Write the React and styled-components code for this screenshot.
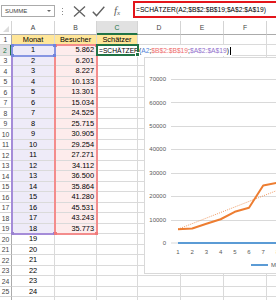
import React from "react";
import styled, { createGlobalStyle } from "styled-components";

const GlobalStyle = createGlobalStyle`
  html, body {
    margin: 0;
    padding: 0;
    background: #fff;
  }
  body {
    width: 276px;
    height: 300px;
    overflow: hidden;
    font-family: "Liberation Sans", Arial, sans-serif;
    color: #000;
  }
`;

const COL_WIDTHS = [43, 42, 41, 43, 43, 43, 43];
const LETTERS = ["A", "B", "C", "D", "E", "F", "G"];
const VISITORS = [
  5862, 6201, 8227, 10133, 13301, 15034, 24525, 25715, 30905, 29254, 27271,
  34112, 36500, 35864, 41280, 45531, 43243, 35773,
];
const ROW_COUNT = 26;

const fmt = (n) => String(n).replace(/\B(?=(\d{3})+(?!\d))/g, ".");

// chart scale, in page pixels
const yv = (v) => 243 - (v * 23.43) / 10000;
const xi = (i) => 178 + 14.2 * (i - 1);

function App() {
  const rows = [];
  for (let r = 1; r <= ROW_COUNT; r++) {
    const cells = LETTERS.map((letter) => {
      let text = "";
      let fill;
      let align = "left";
      if (r === 1 && letter === "A") text = "Monat";
      if (r === 1 && letter === "B") text = "Besucher";
      if (r === 1 && letter === "C") text = "Schätzer";
      if (r === 1 && "ABC".includes(letter)) {
        fill = "#ffe699";
        align = "center";
      }
      if (r >= 2 && r <= 25 && letter === "A") {
        text = String(r - 1);
        align = "center";
      }
      if (r >= 2 && r <= 19 && letter === "A") fill = "#eeebf8";
      if (r >= 2 && r <= 19 && letter === "B") {
        text = fmt(VISITORS[r - 2]);
        fill = "#fdecec";
        align = "right";
      }
      return (
        <Cell key={letter} $fill={fill} $align={align}>
          {text}
        </Cell>
      );
    });
    rows.push(
      <React.Fragment key={r}>
        <RowHead $active={r === 2}>{r}</RowHead>
        {cells}
      </React.Fragment>
    );
  }

  const besucherPts = VISITORS.map((v, i) => `${xi(i + 1)},${yv(v)}`).join(" ");
  const monatPts = VISITORS.map((_, i) => `${xi(i + 1)},${yv(i + 1)}`).join(" ");

  return (
    <Page>
      <GlobalStyle />
      <Toolbar>
        <NameBox>
          <span>SUMME</span>
          <Caret />
        </NameBox>
        <Grip>
          <i />
          <i />
          <i />
        </Grip>
        <ToolButton $gap={10} $w={13}>
          <svg width="13" height="11" viewBox="0 0 13 11">
            <path d="M1 0.5 L12 10.5 M12 0.5 L1 10.5" stroke="#606060" strokeWidth="1.3" fill="none" />
          </svg>
        </ToolButton>
        <ToolButton $gap={6} $w={13}>
          <svg width="13" height="11" viewBox="0 0 13 11">
            <path d="M0.8 5.8 L4.5 9.6 L12.3 0.8" stroke="#606060" strokeWidth="1.4" fill="none" />
          </svg>
        </ToolButton>
        <Fx>
          f<sub>x</sub>
        </Fx>
        <FormulaBox>=SCHÄTZER(A2;$B$2:$B$19;$A$2:$A$19)</FormulaBox>
      </Toolbar>

      <SheetArea>
        <SheetGrid>
          <Corner />
          {LETTERS.map((l) => (
            <ColHead key={l} $active={l === "C"}>
              {l}
            </ColHead>
          ))}
          {rows}
        </SheetGrid>

        <OverlayGrid>
          <RangeBox $col="2" $row="3 / span 18" $color="#a58cd8">
            <Handle $pos="bl" $color="#9a82d0" />
            <Handle $pos="br" $color="#9a82d0" />
          </RangeBox>
          <RangeBox $col="3" $row="3 / span 18" $color="#f38c8c">
            <Handle $pos="tl" $color="#f07a7a" />
            <Handle $pos="tr" $color="#f07a7a" />
            <Handle $pos="bl" $color="#f07a7a" />
            <Handle $pos="br" $color="#f07a7a" />
          </RangeBox>
          <RangeBox $col="2" $row="3" $color="#8796e2">
            <Handle $pos="tl" $color="#7184dc" />
            <Handle $pos="tr" $color="#7184dc" />
            <Handle $pos="bl" $color="#7184dc" />
            <Handle $pos="br" $color="#7184dc" />
          </RangeBox>
          <ActiveCell>
            <FillHandle />
          </ActiveCell>
          <EditText>
            =SCHÄTZER(<Ref $c="#4f7fd8">A2</Ref>;<Ref $c="#ee6a6a">$B$2:$B$19</Ref>;
            <Ref $c="#9270cc">$A$2:$A$19</Ref>)<Caret2 />
          </EditText>

          <Chart>
            <svg width="164" height="215" viewBox="145 58 164 215">
              {[10000, 20000, 30000, 40000, 50000, 60000, 70000].map((v) => (
                <line
                  key={v}
                  x1="171"
                  x2="320"
                  y1={Math.round(yv(v)) + 0.5}
                  y2={Math.round(yv(v)) + 0.5}
                  stroke="#d9d9d9"
                  strokeWidth="1"
                />
              ))}
              <line x1="171" x2="320" y1="243" y2="243" stroke="#d9d9d9" strokeWidth="1" />
              {[0, 10000, 20000, 30000, 40000, 50000, 60000, 70000].map((v) => (
                <text
                  key={v}
                  x="166"
                  y={yv(v)}
                  dy="2.1"
                  textAnchor="end"
                  fontSize="6"
                  fill="#595959"
                  fontFamily="Liberation Sans, Arial, sans-serif"
                >
                  {v}
                </text>
              ))}
              {VISITORS.map((_, i) => (
                <text
                  key={i}
                  x={xi(i + 1)}
                  y="254"
                  textAnchor="middle"
                  fontSize="6"
                  fill="#595959"
                  fontFamily="Liberation Sans, Arial, sans-serif"
                >
                  {i + 1}
                </text>
              ))}
              <polyline points={monatPts} fill="none" stroke="#5b9bd5" strokeWidth="2" />
              <line
                x1={xi(1)}
                y1={yv(5900.7)}
                x2={xi(18)}
                y2={yv(46180)}
                stroke="#f09a62"
                strokeWidth="1"
                strokeDasharray="1 1.2"
              />
              <polyline
                points={besucherPts}
                fill="none"
                stroke="#ed7d31"
                strokeWidth="2"
                strokeLinejoin="round"
              />
              <line x1="251" x2="268" y1="265" y2="265" stroke="#5b9bd5" strokeWidth="2" />
              <text
                x="271"
                y="267.2"
                fontSize="6"
                fill="#595959"
                fontFamily="Liberation Sans, Arial, sans-serif"
              >
                Monat
              </text>
            </svg>
          </Chart>
        </OverlayGrid>
      </SheetArea>
    </Page>
  );
}

export default App;

const gridColumns = `12px ${COL_WIDTHS.map((w) => `${w}px`).join(" ")}`;
const gridRows = "14px repeat(13, 10px 11px)";

const Page = styled.div`
  width: 276px;
  height: 300px;
  overflow: hidden;
  display: flex;
  flex-direction: column;
`;

const Toolbar = styled.div`
  height: 21px;
  flex: none;
  display: flex;
  align-items: flex-start;
  background: #fff;
  & > * {
    flex: none;
  }
`;

const NameBox = styled.div`
  margin: 5px 0 0 1px;
  width: 54px;
  height: 12px;
  box-sizing: border-box;
  border: 1px solid #ababab;
  display: flex;
  align-items: center;
  justify-content: space-between;
  padding: 0 3px 0 3px;
  font-size: 6px;
  color: #444;
`;

const Caret = styled.span`
  width: 0;
  height: 0;
  border-left: 2px solid transparent;
  border-right: 2px solid transparent;
  border-top: 2px solid #666;
`;

const Grip = styled.div`
  margin: 8px 0 0 7px;
  display: flex;
  flex-direction: column;
  gap: 2px;
  i {
    display: block;
    width: 1px;
    height: 1px;
    background: #8a8a8a;
  }
`;

const ToolButton = styled.div`
  margin: 6px 0 0 ${(p) => p.$gap}px;
  width: ${(p) => p.$w}px;
  height: 11px;
  display: flex;
  align-items: center;
  justify-content: center;
`;

const Fx = styled.div`
  margin: 4px 0 0 9px;
  width: 11px;
  font-family: "Liberation Serif", "Times New Roman", serif;
  font-style: italic;
  font-size: 11px;
  line-height: 12px;
  color: #606060;
  white-space: nowrap;
  sub {
    font-size: 7px;
    vertical-align: -1px;
  }
`;

const FormulaBox = styled.div`
  margin: 1px 0 0 8px;
  width: 170px;
  height: 17px;
  box-sizing: border-box;
  border: 2px solid #e3151b;
  padding-left: 1px;
  font-size: 6.7px;
  line-height: 13px;
  white-space: nowrap;
  color: #000;
`;

const SheetArea = styled.div`
  position: relative;
  flex: 1;
  overflow: hidden;
`;

const SheetGrid = styled.div`
  display: grid;
  grid-template-columns: ${gridColumns};
  grid-template-rows: ${gridRows};
`;

const OverlayGrid = styled(SheetGrid)`
  position: absolute;
  top: 0;
  left: 0;
  pointer-events: none;
`;

const Corner = styled.div`
  box-sizing: border-box;
  border-right: 1px solid #d4d4d4;
  border-bottom: 1px solid #ababab;
  position: relative;
  &::after {
    content: "";
    position: absolute;
    right: 2px;
    bottom: 2px;
    border-left: 6px solid transparent;
    border-bottom: 6px solid #dcdcdc;
  }
`;

const ColHead = styled.div`
  box-sizing: border-box;
  border-right: 1px solid #d4d4d4;
  border-bottom: ${(p) => (p.$active ? "2px solid #217346" : "1px solid #ababab")};
  background: ${(p) => (p.$active ? "#e1e1e1" : "#fff")};
  color: ${(p) => (p.$active ? "#217346" : "#444")};
  font-size: 6.8px;
  display: flex;
  align-items: center;
  justify-content: center;
`;

const RowHead = styled.div`
  box-sizing: border-box;
  border-right: ${(p) => (p.$active ? "2px solid #217346" : "1px solid #ababab")};
  border-bottom: 1px solid #d4d4d4;
  background: ${(p) => (p.$active ? "#e1e1e1" : "#fff")};
  color: ${(p) => (p.$active ? "#217346" : "#444")};
  font-size: 6.8px;
  display: flex;
  align-items: center;
  justify-content: center;
`;

const Cell = styled.div`
  box-sizing: border-box;
  border-right: 1px solid #dadada;
  border-bottom: 1px solid #dadada;
  background: ${(p) => p.$fill || "#fff"};
  font-size: 7.4px;
  line-height: 1;
  display: flex;
  align-items: center;
  justify-content: ${(p) =>
    p.$align === "right" ? "flex-end" : p.$align === "center" ? "center" : "flex-start"};
  padding: 0 2px;
  overflow: hidden;
  white-space: nowrap;
  color: #000;
`;

const RangeBox = styled.div`
  grid-column: ${(p) => p.$col};
  grid-row: ${(p) => p.$row};
  margin: -1px -1px -1px -1px;
  border: 2px solid ${(p) => p.$color};
  position: relative;
`;

const Handle = styled.span`
  position: absolute;
  width: 3px;
  height: 3px;
  background: ${(p) => p.$color};
  ${(p) => (p.$pos[0] === "t" ? "top: -2px;" : "bottom: -2px;")}
  ${(p) => (p.$pos[1] === "l" ? "left: -2px;" : "right: -2px;")}
`;

const ActiveCell = styled.div`
  grid-column: 4;
  grid-row: 3;
  margin: -1px -1px 0 -1px;
  border: 2px solid #217346;
  position: relative;
`;

const FillHandle = styled.span`
  position: absolute;
  right: -3px;
  bottom: -3px;
  width: 3px;
  height: 3px;
  background: #217346;
  border: 1px solid #fff;
`;

const EditText = styled.div`
  grid-column: 4 / span 4;
  grid-row: 3;
  justify-self: start;
  margin-left: 1px;
  padding: 0 1px 0 1px;
  background: #fff;
  font-size: 6.7px;
  line-height: 11px;
  white-space: nowrap;
  color: #000;
  display: flex;
  align-items: center;
`;

const Ref = styled.span`
  color: ${(p) => p.$c};
`;

const Caret2 = styled.span`
  display: inline-block;
  width: 1px;
  height: 8px;
  margin-left: 1px;
  background: #000;
`;

const Chart = styled.div`
  grid-column: 5 / span 4;
  grid-row: 4 / span 21;
  align-self: start;
  margin: 1px 0 0 6px;
  height: 217px;
  box-sizing: border-box;
  border: 1px solid #d9d9d9;
  background: #fff;
  overflow: hidden;
  svg {
    display: block;
  }
`;
